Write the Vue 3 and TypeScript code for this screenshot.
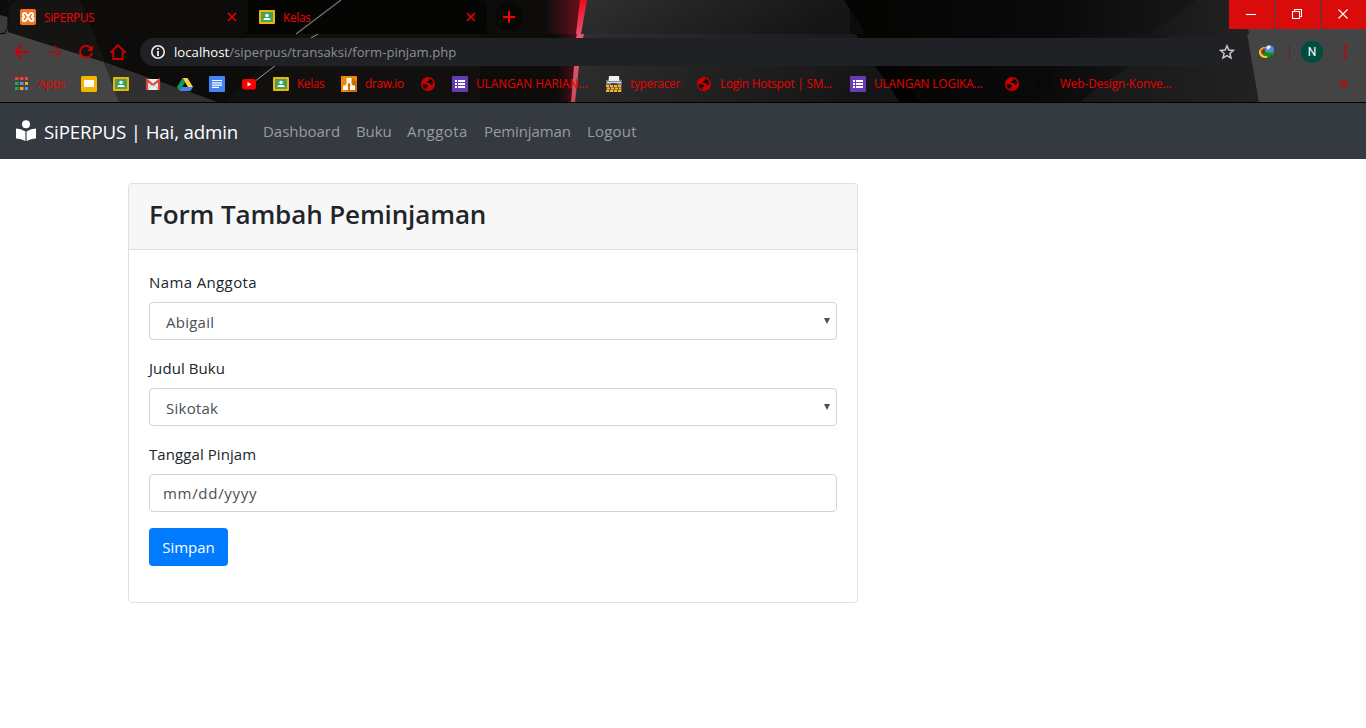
<script setup lang="ts">
import { ref } from 'vue'

interface Bookmark {
  icon: string
  label?: string
  width: number
  spacing?: number
}

const bookmarks: Bookmark[] = [
  { icon: 'apps', label: 'Apps', width: 67, spacing: -0.05 },
  { icon: 'slides', width: 32 },
  { icon: 'classroom', width: 32 },
  { icon: 'gmail', width: 32 },
  { icon: 'drive', width: 32 },
  { icon: 'docs', width: 32 },
  { icon: 'youtube', width: 32 },
  { icon: 'classroom', label: 'Kelas', width: 68, spacing: -0.35 },
  { icon: 'drawio', label: 'draw.io', width: 79, spacing: -0.3 },
  { icon: 'globe', width: 32 },
  { icon: 'forms', label: 'ULANGAN HARIAN...', width: 154, spacing: 0.02 },
  { icon: 'typeracer', label: 'typeracer', width: 90, spacing: -0.27 },
  { icon: 'globe', label: 'Login Hotspot | SM...', width: 154, spacing: -0.2 },
  { icon: 'forms', label: 'ULANGAN LOGIKA...', width: 154, spacing: -0.1 },
  { icon: 'globe', width: 32 },
  { icon: 'github', label: 'Web-Design-Konve...', width: 150, spacing: -0.08 },
]

const links = [
  { label: 'Dashboard', width: 77, spacing: -0.04 },
  { label: 'Buku', width: 35, spacing: -0.1 },
  { label: 'Anggota', width: 61, spacing: 0.45 },
  { label: 'Peminjaman', width: 87, spacing: -0.1 },
  { label: 'Logout', width: 50, spacing: 0.2 },
]
const member = ref('Abigail')
const book = ref('Sikotak')
</script>

<template>
  <div class="window">
    <header class="browser">
      <svg class="theme" width="1366" height="102" viewBox="0 0 1366 102" aria-hidden="true">
        <defs>
          <linearGradient id="glow" x1="0" x2="1" y1="0" y2="0">
            <stop offset="0" stop-color="#0e0d0c" /><stop offset="1" stop-color="#68101a" />
          </linearGradient>
          <linearGradient id="beam" x1="0" x2="0" y1="0" y2="1">
            <stop offset="0" stop-color="#f00a24" /><stop offset=".36" stop-color="#e85870" /><stop offset="1" stop-color="#c84a5a" />
          </linearGradient>
          <linearGradient id="steel" x1="0" x2="1" y1="0" y2=".2">
            <stop offset="0" stop-color="#303030" /><stop offset=".5" stop-color="#222" /><stop offset="1" stop-color="#151515" />
          </linearGradient>
          <linearGradient id="night" x1="0" x2="1">
            <stop offset="0" stop-color="#050403" /><stop offset=".6" stop-color="#0a0a0a" /><stop offset="1" stop-color="#181818" />
          </linearGradient>
          <linearGradient id="slate" x1="0" x2="1">
            <stop offset="0" stop-color="#171717" /><stop offset="1" stop-color="#222" />
          </linearGradient>
        </defs>
        <rect width="1366" height="103" fill="#0d0c0b" />
        <path d="M0 0H80L105 62L8 32V0Z" fill="#151413" />
        <path d="M0 15L8 17V33H0Z" fill="#3c3c3c" />
        <path d="M8 32L62 49L104 62L120 103H0V34Q8 34 8 32Z" fill="#444" />
        <path d="M104 62L218 102H119Z" fill="#303030" />
        <path d="M223 102L300 34H480V102Z" fill="#11100e" />
        <rect x="545" width="36" height="34" fill="url(#glow)" />
        <rect x="558" y="34" width="20" height="69" fill="url(#glow)" opacity=".75" />
        <path d="M584 0H850V34H578Z" fill="url(#steel)" />
        <path d="M580 34H857L875 66L900 103H572Z" fill="url(#steel)" />
        <path d="M844 0H1200L1151 34H865Z" fill="url(#night)" />
        <path d="M856 34H1171L1078 102H925Z" fill="url(#night)" />
        <path d="M856 34L875 66L900 102H922L890 62Z" fill="#030303" />
        <path d="M1197 0H1242L1249 34H1151Z" fill="url(#slate)" />
        <path d="M1171 34H1247L1259 103H1078Z" fill="url(#slate)" />
        <path d="M1242 0H1366V103H1259L1247 34H1249Z" fill="#444" />
        <path d="M580 0H587L581 34H576Z M577 34H584L583 38H576Z M574 66H579L575 102H571Z" fill="url(#beam)" />
        <path d="M318 34L311 38M276 65L254 82" stroke="#999" />
        <path d="M248 0H479Q487 1 487 8V26Q487 34 495 34H240Q248 34 248 26Z" fill="#000" opacity=".58" />
        <path d="M0 34Q8 33 8 25V8Q8 0 16 0" fill="none" stroke="#080808" />
        <path d="M341 0L296 34" stroke="#777" stroke-width="1.2" />
      </svg>

      <div class="tabs">
        <div class="tab">
          <svg class="icon" viewBox="0 0 16 16"><rect width="16" height="16" rx="2" fill="#f37623" /><path d="M5 4C1.8 3.5 2.5 7.7 5 7.8C1.8 8.4 1.8 12.5 5 12C7 11.7 6.5 9 8 9S9 11.7 11 12C14.2 12.5 14.2 8.4 11 7.8C13.5 7.7 14.2 3.5 11 4C9.1 4.2 9.5 7 8 7S6.9 4.2 5 4Z" fill="none" stroke="#fff" stroke-width="2" /></svg>
          <span>SiPERPUS</span>
          <svg class="cross" viewBox="0 0 10 10"><path d="M1 1L9 9M9 1L1 9" /></svg>
        </div>
        <div class="tab">
          <svg class="icon" viewBox="0 0 16 16"><rect y="1" width="16" height="14" rx="1" fill="#f4b400" /><path d="M2 3H14V13H2Z" fill="#43a25d" /><circle cx="8" cy="6.5" r="1.7" fill="#fff" /><path d="M4.5 11V10C4.5 8.5 11.5 8.5 11.5 10V11Z" fill="#fff" /></svg>
          <span>Kelas</span>
          <svg class="cross" viewBox="0 0 10 10"><path d="M1 1L9 9M9 1L1 9" /></svg>
        </div>
        <button class="new-tab" aria-label="New tab"><svg width="14" height="14" viewBox="0 0 14 14"><path d="M7 1V13M1 7H13" stroke="red" stroke-width="2" /></svg></button>
        <div class="controls">
          <button aria-label="Minimize"><svg viewBox="0 0 12 12"><path d="M1 6.5H11" /></svg></button>
          <button aria-label="Restore"><svg viewBox="0 0 12 12"><path d="M1.5 3.5H8.5V10.5H1.5ZM3.5 3.5V1.5H10.5V8.5H8.5" /></svg></button>
          <button aria-label="Close"><svg viewBox="0 0 12 12"><path d="M1.5 1.5L10.5 10.5M10.5 1.5L1.5 10.5" /></svg></button>
        </div>
      </div>

      <div class="toolbar">
        <div class="navigation">
          <svg viewBox="0 0 16 16"><path d="M15 8H2M8 1.5L1.5 8L8 14.5" /></svg>
          <svg class="dim" viewBox="0 0 16 16"><path d="M1 8H14M8 1.5L14.5 8L8 14.5" /></svg>
          <svg viewBox="0 0 16 16"><path d="M13 4.2A6 6 0 1 0 14 9" /><path d="M15 1V7H9Z" fill="#c80000" stroke="none" /></svg>
          <svg viewBox="0 0 16 16"><path d="M1 8L8 1.3L15 8H12.7V15H3.3V8Z" /></svg>
        </div>
        <div class="address">
          <svg class="info" viewBox="0 0 16 16"><circle cx="8" cy="8" r="6.2" fill="none" stroke="#eee" stroke-width="1.6" /><path d="M8 7V12M8 4V5.7" stroke="#eee" stroke-width="1.8" /></svg>
          <span class="url"><b>localhost</b>/siperpus/transaksi/form-pinjam.php</span>
          <svg class="star" viewBox="0 0 16 16"><path d="M8 1.8L9.8 6L14.4 6.4L10.9 9.4L12 13.9L8 11.5L4 13.9L5.1 9.4L1.6 6.4L6.2 6Z" fill="none" stroke="#c8c8c8" stroke-width="1.5" /></svg>
        </div>
        <svg class="extension" width="18" height="16" viewBox="0 0 18 16"><path d="M8 3A6 5.5 0 0 0 1 9Q2 14 8 14L12 12L9 5Z" fill="#eed522" /><path d="M8 3.5Q3 4 2.5 8Q4 12 8 12Z" fill="#d83a20" /><path d="M8 5Q4 6 4.5 9L8 11Z" fill="#174b36" /><circle cx="11.4" cy="5.8" r="4.7" fill="#5289ce" /><path d="M8 3.5Q11 0 13 3L10 6Z" fill="#dfedf9" /><path d="M6 8L14 9L17 8L15 12L13 11L10 15L9 12L5 11Z" fill="#0c9213" /></svg>
        <span class="divider"></span>
        <span class="avatar">N</span>
        <svg class="dots" width="4" height="14" viewBox="0 0 4 14"><g fill="#cc0000"><circle cx="2" cy="2" r="1.7" /><circle cx="2" cy="7" r="1.7" /><circle cx="2" cy="12" r="1.7" /></g></svg>
      </div>

      <div class="bookmarks">
        <div v-for="(item, i) in bookmarks" :key="i" class="bookmark" :style="{ width: item.width + 'px' }">
          <svg class="icon" viewBox="0 0 16 16">
            <g v-if="item.icon === 'apps'"><path d="M1 1H4.5V4H1ZM6 1H9.5V4H6ZM11 1H14V4H11Z" fill="#ed4437" /><path d="M1 6H4.5V9H1ZM1 11H4.5V14H1Z" fill="#21a65b" /><path d="M6 6H9.5V9H6ZM11 11H14V14H11Z" fill="#5892ed" /><path d="M11 6H14V9H11ZM6 11H9.5V14H6Z" fill="#f2ad15" /></g>
            <g v-else-if="item.icon === 'slides'"><rect width="16" height="16" rx="1.5" fill="#f4b400" /><path d="M3 4H13V11H3Z" fill="#fff" /></g>
            <g v-else-if="item.icon === 'classroom'"><rect y="1" width="16" height="14" rx="1" fill="#f4b400" /><path d="M2 3H14V13H2Z" fill="#43a25d" /><circle cx="8" cy="6.5" r="1.7" fill="#fff" /><path d="M4.5 11V10C4.5 8.5 11.5 8.5 11.5 10V11Z" fill="#fff" /></g>
            <g v-else-if="item.icon === 'gmail'"><rect x="1" y="3" width="14" height="11" rx="1" fill="#eee" /><path d="M2 14V4L8 9L14 4V14" fill="none" stroke="#dc4437" stroke-width="2.2" /><path d="M3 13L7 9L8 10L9 9L13 13" fill="none" stroke="#bbb" /></g>
            <g v-else-if="item.icon === 'drive'"><path d="M5.5 2H10.5L16 11H11Z" fill="#ffcf48" /><path d="M5.5 2L0 11L2.7 15L8 6.5Z" fill="#129b58" /><path d="M5 11H16L13.5 15H2.7Z" fill="#4683ed" /></g>
            <g v-else-if="item.icon === 'docs'"><rect width="16" height="16" rx="1" fill="#4285f4" /><path d="M3 4.5H13M3 6.8H13M3 9.1H13M3 11.4H10" stroke="#fff" stroke-width="1.2" /></g>
            <g v-else-if="item.icon === 'youtube'"><rect x="1" y="3" width="14" height="10.5" rx="2.5" fill="red" /><path d="M6.5 6V10.5L10.5 8.2Z" fill="#fff" /></g>
            <g v-else-if="item.icon === 'drawio'"><rect width="16" height="16" rx="1" fill="#f08705" /><path d="M12 2L16 6V16H10L4 14Z" fill="#cf6e00" /><path d="M8 4L4.5 11M8 4L11.5 11" stroke="#fff" stroke-width="1.6" /><path d="M5.5 2H10.5V6.5H5.5ZM2 9.5H7V14H2ZM9 9.5H14V14H9Z" fill="#fff" /></g>
            <g v-else-if="item.icon === 'globe'"><circle cx="8" cy="8" r="7" fill="#c80000" /><path d="M9.5 2.8L8.5 5L7 5.5V7H10V9H12L13.3 7.5A5.5 5.5 0 0 0 9.5 2.8ZM2.5 8.2H6.5L8 9.5V11H6.5V13.3A5.6 5.6 0 0 1 2.5 8.2Z" fill="#120909" /></g>
            <g v-else-if="item.icon === 'forms'"><rect width="16" height="16" rx="1" fill="#673ab7" /><path d="M3 5H5M6 5H13M3 8H5M6 8H13M3 11H5M6 11H13" stroke="#fff" stroke-width="2" /></g>
            <g v-else-if="item.icon === 'typeracer'"><path d="M0 4H16V9H0Z" fill="#69727a" /><path d="M3 0H13L13.5 5H2.5Z" fill="#f0f0f0" /><path d="M1 6.5H15" stroke="#d9d9d9" stroke-width="1.5" /><path d="M5 8H11" stroke="#222" stroke-width="1.2" /><path d="M0 9H16V16H0Z" fill="#6a4f1c" /><path d="M0 10H16M1 12.5H15M0 15H16" stroke="#edb43b" stroke-width="2" stroke-dasharray="3 1" /></g>
            <path v-else d="M5 14V12Q2 13 1 10Q3 12 5 10Q1 9 2 5V2L5 4H10L13 2V5Q15 9 10 10V14" fill="none" stroke="#050505" />
          </svg>
          <span v-if="item.label" :style="{ letterSpacing: item.spacing + 'px' }">{{ item.label }}</span>
        </div>
        <svg class="more" width="9" height="8" viewBox="0 0 9 8"><path d="M1 1L4 4L1 7M5 1L8 4L5 7" fill="none" stroke="#d00000" stroke-width="1.7" /></svg>
      </div>
    </header>

    <nav class="navbar">
      <div class="brand">
        <svg width="22" height="22" viewBox="0 0 22 22"><circle cx="11" cy="4.2" r="4" fill="#fff" /><path d="M1 8.5Q6 8.5 10.3 11.5V21Q6 18.3 1 18.5ZM21 8.5Q16 8.5 11.7 11.5V21Q16 18.3 21 18.5Z" fill="#fff" /><path d="M11 11V21" stroke="#94bcc5" stroke-width=".8" /></svg>
        <span>SiPERPUS | Hai, admin</span>
      </div>
      <div class="links"><a v-for="link in links" :key="link.label" :style="{ width: link.width + 'px', letterSpacing: link.spacing + 'px' }">{{ link.label }}</a></div>
    </nav>

    <main>
      <form class="card" @submit.prevent>
        <div class="card-header"><h3>Form Tambah Peminjaman</h3></div>
        <div class="card-body">
          <div class="group">
            <label for="member" class="wide">Nama Anggota</label>
            <div class="select-wrap"><select id="member" v-model="member"><option>Abigail</option></select><svg class="caret" viewBox="0 0 6 6"><path d="M0 0H6L3 6Z" /></svg></div>
          </div>
          <div class="group">
            <label for="book">Judul Buku</label>
            <div class="select-wrap"><select id="book" v-model="book"><option>Sikotak</option></select><svg class="caret" viewBox="0 0 6 6"><path d="M0 0H6L3 6Z" /></svg></div>
          </div>
          <div class="group">
            <label for="date">Tanggal Pinjam</label>
            <input id="date" type="text" placeholder="mm/dd/yyyy">
          </div>
          <button class="submit" type="submit">Simpan</button>
        </div>
      </form>
    </main>
  </div>
</template>

<style>
body { margin: 0; overflow: hidden; background: #fff; }
</style>

<style scoped>
* { box-sizing: border-box; }
.window { width: 1366px; height: 728px; overflow: hidden; font-family: "Open Sans", "Noto Sans", sans-serif; color: #212529; }
button { border: 0; padding: 0; font-family: inherit; }
.browser { position: relative; height: 103px; border-bottom: 1px solid #000; background: #0d0c0b; }
.theme { position: absolute; inset: 0; }
.tabs, .toolbar, .bookmarks { position: relative; display: flex; }
.tabs { height: 38px; padding-left: 8px; }
.tab { display: flex; align-items: center; width: 239px; height: 34px; padding: 0 10px 0 12px; gap: 8px; color: #f00; font-size: 11.8px; letter-spacing: -.3px; }
.tab span { flex: 1; padding-bottom: 1px; }
.icon { display: block; width: 16px; height: 16px; flex: none; }
.cross { width: 10px; height: 10px; stroke: #e80000; stroke-width: 1.7; }
.new-tab { display: grid; place-items: center; width: 28px; height: 28px; margin: 3px 0 0 9px; border-radius: 50%; background: #080706; }
.controls { display: flex; gap: 1px; height: 29px; margin-left: auto; }
.controls button { display: grid; place-items: center; width: 45px; padding: 0 2px 1px 0; background: #da0b0b; }
.controls svg { width: 12px; height: 12px; fill: none; stroke: #fff; stroke-width: 1.1; }
.toolbar { height: 28px; align-items: center; padding-left: 14px; }
.navigation { display: flex; gap: 16px; width: 126px; }
.navigation svg { width: 16px; height: 16px; fill: none; stroke: #c80000; stroke-width: 1.9; }
.navigation .dim { opacity: .5; }
.address { display: flex; align-items: center; width: 1104px; height: 28px; padding: 0 9px 0 10px; border-radius: 14px; background: #202124; }
.info { width: 16px; height: 16px; }
.url { margin-left: 8px; color: #8d8f92; font-size: 13.1px; letter-spacing: .04px; }
.url b { color: #fff; font-weight: 400; }
.star { width: 16px; height: 16px; margin-left: auto; }
.extension { margin-left: 14px; }
.divider { width: 1px; height: 16px; margin-left: 13px; background: #6e2020; }
.avatar { display: grid; place-items: center; width: 22px; height: 22px; margin-left: 11px; border-radius: 50%; background: #004d40; color: #fff; font-family: Roboto, sans-serif; font-size: 12px; }
.dots { margin-left: 20px; }
.bookmarks { align-items: center; height: 36px; padding: 0 18px 0 14px; color: #ee0000; font-size: 11.8px; }
.bookmark { display: flex; align-items: center; gap: 8px; flex: none; white-space: nowrap; }
.bookmark span { padding-bottom: 2px; }
.more { margin-left: auto; }
.navbar { display: flex; align-items: center; height: 56px; padding: 0 16px 0 15px; background: #343a40; }
.brand { display: flex; align-items: center; gap: 7px; width: 248px; color: #fff; font-size: 18.7px; letter-spacing: -.14px; white-space: nowrap; }
.links { display: flex; gap: 16px; color: #999c9f; font-size: 15px; }
.links a { white-space: nowrap; }
main { padding: 24px 0 0 128px; }
.card { width: 730px; height: 420px; border: 1px solid #dfdfdf; border-radius: 4px; background: #fff; overflow: hidden; }
.card-header { height: 66px; padding: 12px 20px; border-bottom: 1px solid #dfdfdf; background: #f7f7f7; }
h3 { margin: 0; font-size: 26px; font-weight: 600; line-height: 36px; letter-spacing: -.12px; white-space: nowrap; }
.card-body { padding: 20px; }
.group { margin-bottom: 16px; }
label { display: block; margin-bottom: 8px; font-size: 15px; line-height: 24px; letter-spacing: .08px; }
label.wide { letter-spacing: .38px; }
.select-wrap { position: relative; }
select, input { display: block; appearance: none; width: 100%; height: 38px; padding: 2px 16px 0; border: 1px solid #ced4da; border-radius: 4px; background: #fff; color: #495057; font-family: inherit; font-size: 15px; letter-spacing: .25px; outline: 0; }
input { padding: 0 13px; letter-spacing: .7px; }
input::placeholder { color: #495057; opacity: 1; }
.caret { position: absolute; right: 7px; top: 16px; width: 6px; height: 6px; fill: #495057; }
.submit { display: block; width: 79px; height: 38px; border-radius: 4px; background: #007bff; color: #fff; font-size: 15px; }
</style>
